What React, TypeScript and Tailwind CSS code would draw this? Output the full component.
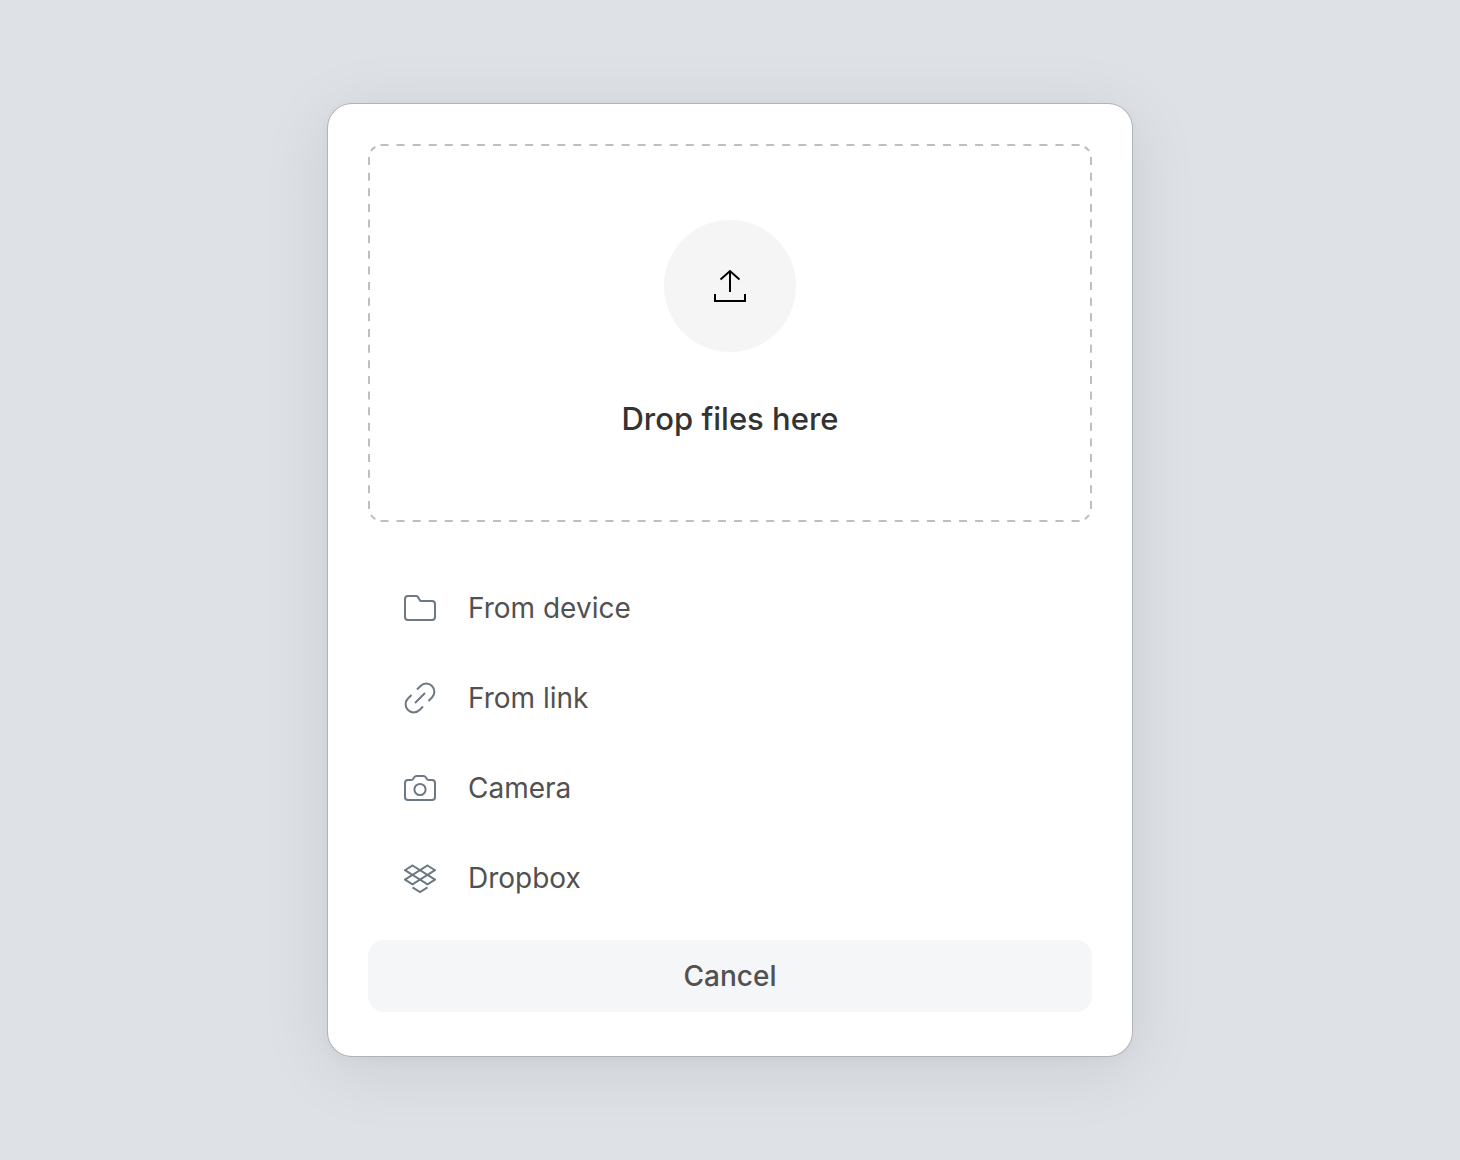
import type { ReactNode } from 'react';

type Source = {
  id: string;
  label: string;
  icon: ReactNode;
};

const sources: Source[] = [
  { id: 'device', label: 'From device', icon: <FolderIcon /> },
  { id: 'link', label: 'From link', icon: <LinkIcon /> },
  { id: 'camera', label: 'Camera', icon: <CameraIcon /> },
  { id: 'dropbox', label: 'Dropbox', icon: <DropboxIcon /> },
];

export default function App() {
  return (
    <main className="flex min-h-screen items-start justify-center bg-[#dee1e6] px-6 py-26 font-['Inter','Liberation_Sans',sans-serif]">
      <section
        aria-label="Upload files"
        className="w-full max-w-201 rounded-3xl bg-white px-10 pt-10 pb-11 shadow-[0_0_0_1px_#b0b3b8,0_4px_16px_rgba(0,0,0,0.03),0_12px_72px_rgba(0,0,0,0.09)]"
      >
        <DropArea />

        <ul className="mt-[41px] mb-[17px]">
          {sources.map((source) => (
            <li key={source.id}>
              <button
                type="button"
                className="flex h-[90px] w-full items-center gap-8 px-9 text-left text-[28px] leading-10 text-[#515151]"
              >
                {source.icon}
                <span>{source.label}</span>
              </button>
            </li>
          ))}
        </ul>

        <button
          type="button"
          className="h-18 w-full rounded-2xl bg-[#f5f6f8] text-[28px] leading-10 font-medium text-[#515151]"
        >
          Cancel
        </button>
      </section>
    </main>
  );
}

function DropArea() {
  return (
    <div className="relative flex flex-col items-center px-6 pt-19 pb-20">
      <DashedOutline />
      <div className="flex size-33 items-center justify-center rounded-full bg-[#f5f5f5]">
        <UploadIcon />
      </div>
      <p className="mt-11 text-[31px] leading-[46px] font-medium text-[#333333]">Drop files here</p>
    </div>
  );
}

function DashedOutline() {
  return (
    <svg
      aria-hidden="true"
      viewBox="0 0 724 378"
      preserveAspectRatio="none"
      className="pointer-events-none absolute inset-0 size-full"
      fill="none"
      stroke="#bbbfc6"
      strokeWidth="2"
    >
      <path d="M12.5 1H711.5M12.5 377H711.5" strokeDasharray="8 8.07" />
      <path d="M1 13V365M723 13V365" strokeDasharray="8 7.636" />
      <path d="M3 7Q4.6 4.4 7.4 3M716.6 3Q719.4 4.4 721 7M721 371Q719.4 373.6 716.6 375M7.4 375Q4.6 373.6 3 371" />
    </svg>
  );
}

function UploadIcon() {
  return (
    <svg aria-hidden="true" className="size-12" viewBox="0 0 48 48" fill="none" stroke="#000" strokeWidth="2">
      <path d="M24 30V9M14.5 17.5L24 9L33.5 17.5M9 32V39H39V32" />
    </svg>
  );
}

function FolderIcon() {
  return (
    <svg aria-hidden="true" className="size-8 shrink-0" viewBox="0 0 32 32" fill="none" stroke="#6d7885" strokeWidth="2">
      <path d="M4 4H12.2Q13.4 4 14 5L15.7 8Q16.2 9 17.4 9H28Q31 9 31 12V25Q31 28 28 28H4Q1 28 1 25V7Q1 4 4 4Z" />
    </svg>
  );
}

function LinkIcon() {
  return (
    <svg aria-hidden="true" className="size-8 shrink-0" viewBox="0 0 32 32" fill="none" stroke="#6d7885" strokeWidth="2">
      <path d="M11 21L21 11M13 7.5L16.5 4A8 8 0 0 1 28 15.5L24.5 19M7.5 13L4 16.5A8 8 0 0 0 15.5 28L19 24.5" />
    </svg>
  );
}

function CameraIcon() {
  return (
    <svg aria-hidden="true" className="size-8 shrink-0" viewBox="0 0 32 32" fill="none" stroke="#6d7885" strokeWidth="2">
      <path d="M4 8H7.3Q8.5 8 9.1 7L10.2 5.3Q11 4 12.5 4H19.5Q21 4 21.8 5.3L22.9 7Q23.5 8 24.7 8H28Q31 8 31 11V25Q31 28 28 28H4Q1 28 1 25V11Q1 8 4 8Z" />
      <circle cx="16" cy="17.5" r="5.6" />
    </svg>
  );
}

function DropboxIcon() {
  return (
    <svg aria-hidden="true" className="size-8 shrink-0" viewBox="0 0 32 32" fill="none" stroke="#6d7885" strokeWidth="2">
      <path d="M8.5 3.5L31 17.6L23.5 22.3L1 8.2ZM23.5 3.5L31 8.2L8.5 22.3L1 17.6ZM8.5 25.3L16 30L23.5 25.3" />
    </svg>
  );
}
